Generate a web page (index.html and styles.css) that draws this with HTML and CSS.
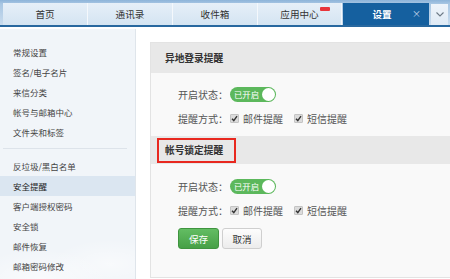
FILE: index.html
```html
<!DOCTYPE html>
<html lang="zh-CN">
<head>
<meta charset="utf-8">
<title>设置 - 安全提醒</title>
<link rel="stylesheet" href="styles.css">
</head>
<body>
<div class="tabbar">
  <div class="tab">首页</div>
  <div class="tab">通讯录</div>
  <div class="tab">收件箱</div>
  <div class="tab tab-app">应用中心<span class="badge"></span></div>
  <div class="tab active"><span class="tab-label">设置</span><span class="close">×</span></div>
  <div class="more">
    <svg width="8" height="5" viewBox="0 0 8 5"><polyline points="0.5,0.5 4,4 7.5,0.5" fill="none" stroke="#6d7a86" stroke-width="1.1"/></svg>
  </div>
</div>
<div class="main">
  <aside class="sidebar">
    <ul class="menu">
      <li>常规设置</li>
      <li>签名/电子名片</li>
      <li>来信分类</li>
      <li>帐号与邮箱中心</li>
      <li>文件夹和标签</li>
    </ul>
    <div class="sep"></div>
    <ul class="menu">
      <li>反垃圾/黑白名单</li>
      <li class="current">安全提醒</li>
      <li>客户端授权密码</li>
      <li>安全锁</li>
      <li>邮件恢复</li>
      <li>邮箱密码修改</li>
    </ul>
  </aside>
  <section class="content">
    <div class="panel">
      <div class="head head1"><span class="title">异地登录提醒</span></div>
      <div class="body">
        <div class="row"><span class="label">开启状态：</span><span class="switch"><span class="switch-text">已开启</span><span class="knob"></span></span></div>
        <div class="row"><span class="label">提醒方式：</span>
          <span class="check"><span class="box"><svg width="7" height="7" viewBox="0 0 7 7"><polyline points="1,3.8 2.8,5.6 6,1.2" fill="none" stroke="#333" stroke-width="1.4"/></svg></span>邮件提醒</span>
          <span class="check"><span class="box"><svg width="7" height="7" viewBox="0 0 7 7"><polyline points="1,3.8 2.8,5.6 6,1.2" fill="none" stroke="#333" stroke-width="1.4"/></svg></span>短信提醒</span>
        </div>
      </div>
      <div class="head head2"><span class="title marked">帐号锁定提醒</span></div>
      <div class="body body2">
        <div class="row"><span class="label">开启状态：</span><span class="switch"><span class="switch-text">已开启</span><span class="knob"></span></span></div>
        <div class="row"><span class="label">提醒方式：</span>
          <span class="check"><span class="box"><svg width="7" height="7" viewBox="0 0 7 7"><polyline points="1,3.8 2.8,5.6 6,1.2" fill="none" stroke="#333" stroke-width="1.4"/></svg></span>邮件提醒</span>
          <span class="check"><span class="box"><svg width="7" height="7" viewBox="0 0 7 7"><polyline points="1,3.8 2.8,5.6 6,1.2" fill="none" stroke="#333" stroke-width="1.4"/></svg></span>短信提醒</span>
        </div>
        <div class="actions">
          <button class="btn btn-save">保存</button>
          <button class="btn btn-cancel">取消</button>
        </div>
      </div>
    </div>
  </section>
</div>
</body>
</html>
```
FILE: styles.css
```css
* { box-sizing: border-box; }
html, body { margin: 0; padding: 0; }
body {
  width: 450px;
  height: 279px;
  overflow: hidden;
  background: #fff;
  font-family: "Noto Sans CJK SC", "Noto Sans", sans-serif;
  color: #333;
}

/* tab bar */
.tabbar {
  display: flex;
  align-items: flex-end;
  height: 27px;
  padding: 3px 0 0 3px;
  background: linear-gradient(#8db4d9, #a9c7e3 4px, #c9dcee);
  border-bottom: 2px solid #28689f;
}
.tab {
  position: relative;
  width: 85px;
  height: 22px;
  line-height: 22px;
  text-align: center;
  font-size: 9.6px;
  color: #333;
  background: linear-gradient(#e6eff8, #d4e4f2);
  border-right: 1px solid #f4f8fc;
}
.tab-app { width: 84px; }
.badge {
  position: absolute;
  left: 62px;
  top: 4px;
  width: 10px;
  height: 4px;
  background: #e8353b;
  border-radius: 1px;
}
.tab.active {
  display: flex;
  align-items: center;
  justify-content: center;
  width: 86px;
  margin-left: 1px;
  background: #15609f;
  color: #fff;
  border-right: none;
}
.tab-label { margin-right: 8px; font-weight: bold; }
.close {
  position: absolute;
  right: 8px;
  top: 0;
  font-size: 9px;
  color: #c9dbec;
}
.more {
  display: flex;
  align-items: center;
  justify-content: center;
  width: 17px;
  height: 21px;
  margin: 0 0 0 2px;
  background: linear-gradient(#eef4fa, #dfeaf5);
}

/* layout */
.main {
  display: flex;
  height: 252px;
  padding-top: 2px;
}
.sidebar {
  width: 136px;
  flex: none;
  padding-top: 13px;
  background:
    radial-gradient(ellipse 70px 30px at 40px 250px, rgba(255,255,255,0.6), rgba(255,255,255,0)),
    radial-gradient(ellipse 60px 25px at 110px 235px, rgba(255,255,255,0.5), rgba(255,255,255,0)),
    #f1f5f9;
  border-right: 1px solid #dfe5eb;
}
.menu {
  list-style: none;
  margin: 0;
  padding: 0;
}
.menu li {
  height: 20px;
  line-height: 20px;
  padding-left: 13px;
  font-size: 8.5px;
  color: #444;
}
.menu li.current {
  background: #dbe6f1;
  color: #222;
}
.sep {
  height: 1px;
  margin: 6px 8px 7px 3px;
  background: #dde3ea;
}

.content {
  flex: 1;
  padding: 13px 0 0 14px;
  background: #fff;
}
.panel {
  height: 236px;
  display: flex;
  flex-direction: column;
  background: #f9f9f9;
  border: 1px solid #e3e3e3;
  border-right: none;
}
.head {
  display: flex;
  align-items: center;
  background: #e8e8e8;
  font-size: 9.7px;
  font-weight: bold;
  color: #333;
}
.head1 {
  height: 30px;
  padding-left: 14px;
}
.head2 {
  height: 28px;
  padding-left: 6px;
}
.marked {
  display: flex;
  align-items: center;
  height: 25px;
  padding: 0 11px 0 6px;
  border: 2px solid #e8281f;
}
.body {
  display: flex;
  flex-direction: column;
  gap: 6px;
  padding: 12px 0 9px 27px;
}
.body2 {
  padding-top: 13px;
  flex: 1;
}
.row {
  display: flex;
  align-items: center;
  height: 18px;
  font-size: 10px;
  color: #555;
}
.label {
  width: 52px;
  flex: none;
}
.switch {
  display: flex;
  align-items: center;
  justify-content: space-between;
  width: 46px;
  height: 15px;
  padding: 0 1px 0 4px;
  border-radius: 8px;
  background: #5cb85c;
}
.switch-text {
  font-size: 8.4px;
  color: #fff;
  line-height: 15px;
}
.knob {
  width: 13px;
  height: 13px;
  border-radius: 50%;
  background: #fff;
}
.check {
  display: flex;
  align-items: center;
  margin-right: 11px;
  color: #555;
}
.box {
  display: flex;
  align-items: center;
  justify-content: center;
  width: 9px;
  height: 9px;
  margin-right: 4px;
  background: #dcdcdc;
  border: 1px solid #c4c4c4;
  border-radius: 1px;
}
.actions {
  display: flex;
  gap: 3px;
  margin-top: 3px;
}
.btn {
  height: 21px;
  padding: 0;
  font-family: inherit;
  font-size: 9.6px;
  border-radius: 3px;
}
.btn-save {
  width: 41px;
  color: #fff;
  background: linear-gradient(#63bd63, #46a046);
  border: 1px solid #3f943f;
}
.btn-cancel {
  width: 40px;
  color: #333;
  background: linear-gradient(#fdfdfd, #ececec);
  border: 1px solid #cfcfcf;
}
```
